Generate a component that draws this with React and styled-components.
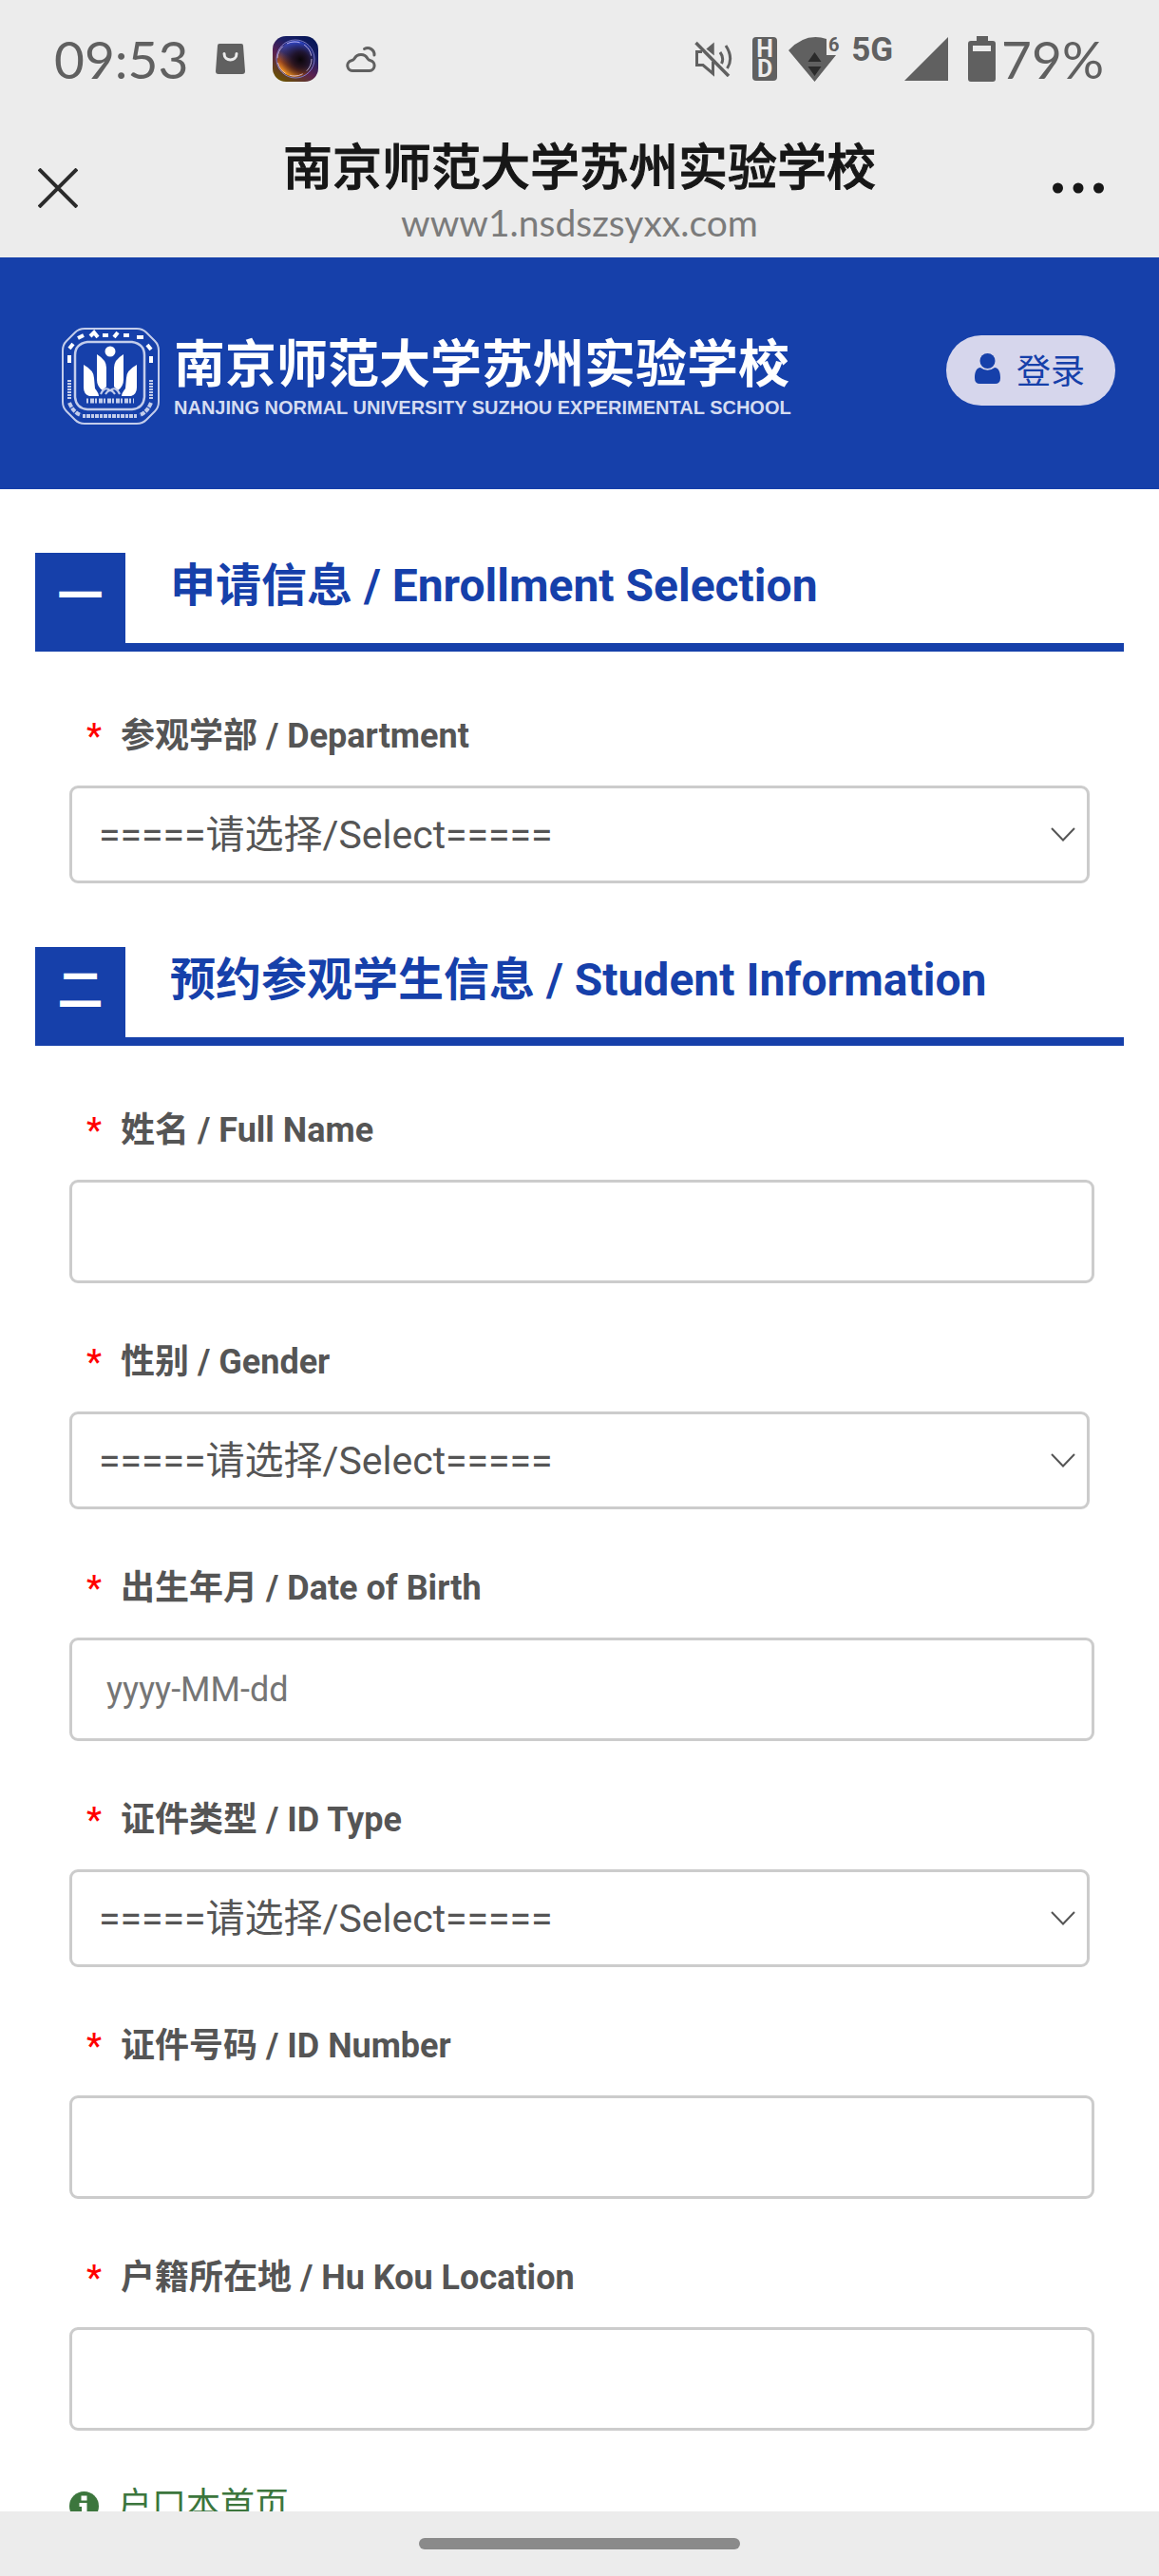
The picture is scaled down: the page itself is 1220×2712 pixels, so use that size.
import React from 'react'
import styled, { createGlobalStyle } from 'styled-components'

// Colors
const blue = '#1640aa'
const chrome = '#ececec'
const statusGray = '#606060'
const textGray = '#555555'

const sans = `Roboto, 'Noto Sans CJK SC', sans-serif`

const GlobalStyle = createGlobalStyle`
  * { box-sizing: border-box; }
  body {
    margin: 0;
    background-color: #fff;
    color: ${textGray};
    font-family: ${sans};
  }
  button, input, select { font-family: inherit; }
`

// Status bar icons
const BagIcon = () => (
  <svg width='31' height='32' viewBox='0 0 31 32'>
    <path d='M4 0h23q2 0 2 2l2 27q0 3-3 3H3q-3 0-3-3L2 2q0-2 2-2z' fill={statusGray} />
    <path d='M9 10.500c0 8.500 13 8.500 13 0' fill='none' stroke={chrome} strokeWidth='3' strokeLinecap='round' />
  </svg>
)

const OrbIcon = () => (
  <svg width='48' height='48' viewBox='0 0 48 48'>
    <defs>
      <linearGradient id='orbBack' x1='0.8' y1='0' x2='0.2' y2='1'>
        <stop offset='0' stopColor='#061656' />
        <stop offset='0.3' stopColor='#1a1f66' />
        <stop offset='0.6' stopColor='#5a2050' />
        <stop offset='1' stopColor='#6a5200' />
      </linearGradient>
      <linearGradient id='orbRing' x1='0.75' y1='0.05' x2='0.25' y2='0.95'>
        <stop offset='0' stopColor='#2f50f0' />
        <stop offset='0.5' stopColor='#3c3470' />
        <stop offset='0.75' stopColor='#a04a20' />
        <stop offset='1' stopColor='#ffa020' />
      </linearGradient>
      <radialGradient id='orbCore' cx='0.64' cy='0.52' r='0.55'>
        <stop offset='0' stopColor='#0a0508' />
        <stop offset='0.4' stopColor='#1a0a14' stopOpacity='0.8' />
        <stop offset='1' stopColor='#1a0a14' stopOpacity='0' />
      </radialGradient>
    </defs>
    <rect width='48' height='48' rx='14' fill='url(#orbBack)' />
    <circle cx='24' cy='24' r='19' fill='url(#orbRing)' />
    <circle cx='24' cy='24' r='19' fill='url(#orbCore)' />
    <circle cx='24' cy='24' r='20' fill='none' stroke='#8f8fe0' strokeWidth='1' opacity='0.8' />
    <circle cx='23' cy='24' r='18' fill='none' stroke='#e9d9ff' strokeWidth='1' strokeDasharray='14 5' opacity='0.7' />
  </svg>
)

const CloudIcon = () => (
  <svg width='33' height='30' viewBox='0 0 33 30' fill='none' stroke={statusGray} strokeWidth='3' strokeLinecap='round'>
    <path d='M8 27.500h17a5.500 5.500 0 0 0 1-10.800q-2-.4-3-2a8 8 0 0 0-14 0q-1 1.600-3 2A5.500 5.500 0 0 0 8 27.500z' />
    <path d='M19.500 4.500A7 7 0 0 1 30 11' />
  </svg>
)

const MuteIcon = () => (
  <svg width='40' height='38' viewBox='0 0 40 38' fill='none' stroke={statusGray} strokeWidth='3'>
    <path d='M8 11.500H2.500v14H9l10.500 9V22' />
    <path d='M13.500 8.500L20 3v11z' fill={statusGray} strokeWidth='1.500' />
    <path d='M27 12q4.500 6 1.500 12M33 5q8.500 13 1.500 24' />
    <path d='M1.500 2L36 37' strokeWidth='3.500' />
  </svg>
)

const WifiIcon = () => (
  <svg width='54' height='47' viewBox='0 0 54 47' overflow='visible'>
    <path d='M0 14Q18-5 40 2v17h10L27.500 47z' fill={statusGray} />
    <path d='M20.500 26h14L27.500 16zM20.500 31h14l-7 10z' fill='#2b2b2b' />
    <text x='42' y='15' fontFamily='Roboto, sans-serif' fontWeight='700' fontSize='20' fill={statusGray}>6</text>
  </svg>
)

const SignalIcon = () => (
  <svg width='46' height='46' viewBox='0 0 46 46'>
    <path d='M46 0v46H0z' fill={statusGray} />
  </svg>
)

const BatteryIcon = () => (
  <svg width='29' height='48' viewBox='0 0 29 48'>
    <path d='M9 0h12v5h5q3 0 3 3v37q0 3-3 3H3q-3 0-3-3V8q0-3 3-3h6z' fill={statusGray} />
    <rect x='5' y='10' width='19' height='6' fill={chrome} />
  </svg>
)

// Page icons
const CloseIcon = () => (
  <svg width='42' height='42' viewBox='0 0 42 42' stroke='#2b2b2b' strokeWidth='4'>
    <path d='M1 1l40 40M41 1L1 41' />
  </svg>
)

const MoreIcon = () => (
  <svg width='54' height='12' viewBox='0 0 54 12' fill='#171717'>
    <circle cx='5.500' cy='6' r='5.500' />
    <circle cx='27' cy='6' r='5.500' />
    <circle cx='48.500' cy='6' r='5.500' />
  </svg>
)

const UserIcon = () => (
  <svg width='27' height='32' viewBox='0 0 27 32' fill={blue}>
    <circle cx='13.500' cy='8' r='8' />
    <path d='M6 15q7.500 5.500 15 0c4.500.5 6 5 6 11q0 6-5.500 6h-16Q0 32 0 26c0-6 1.500-10.500 6-11z' />
  </svg>
)

const ChevronIcon = () => (
  <svg width='26' height='15' viewBox='0 0 26 15' fill='none' stroke={textGray} strokeWidth='2'>
    <path d='M1 1l12 12.500L25 1' />
  </svg>
)

const InfoIcon = () => (
  <svg width='31' height='31' viewBox='0 0 31 31'>
    <circle cx='15.500' cy='15.500' r='15.500' fill='#3c763d' />
    <path d='M12.500 4.500h6v5h-6zM10.500 12h8v10h2.500v4h-10.500v-4h2.500v-6h-2.500z' fill='#fff' />
  </svg>
)

const Emblem = () => (
  <svg width='103' height='102' viewBox='0 0 103 102' fill='none' stroke='#c3cdeb'>
    <path d='M24 1h55q6 0 10 4l9 9q4 4 4 10v54q0 6-4 10l-9 9q-4 4-10 4H24q-6 0-10-4l-9-9q-4-4-4-10V24q0-6 4-10l9-9q4-4 10-4z' strokeWidth='2' />
    <path d='M27 15h47q13 2 13 14v44q-1 12-13 13H27q-12-1-13-13V29q0-12 13-14z' strokeWidth='2.500' />
    <path d='M8 37v-8M8 22l4-5M17 11l6-3M30 9l4-4 4 5M43 8h6M55 10l4-5M65 8h6M79 10h7M90 18l4 5M94 30v7' stroke='#fff' strokeWidth='4' />
    <path d='M8 55v20M94 55v20' strokeWidth='4' strokeDasharray='2 1' />
    <path d='M8 79q4 10 12 13M94 79q-4 10-12 13' strokeWidth='4' strokeDasharray='5 1' />
    <path d='M22 93h58' strokeWidth='4' strokeDasharray='3 1 4 1' />
    <g fill='#fff' stroke='none'>
      <circle cx='51' cy='25' r='5.500' />
      <path d='M23 39q11 6 11 14l1 11q4 5 4 8H29q-6-2-6-9z' />
      <path d='M79 39q-11 6-11 14l-1 11q-4 5-4 8h10q6-2 6-9z' />
      <path d='M37 28q10 6 10 14v20l-4 4q-6-4-6-11z' />
      <path d='M65 28q-10 6-10 14v20l4 4q6-4 6-11z' />
    </g>
    <path d='M41 70q4-9 10-4 6-5 10 4M46 70q5-8 10 0' strokeWidth='2' />
    <path d='M26 77h50' strokeWidth='5' strokeDasharray='2 2 4 1' />
  </svg>
)

// Form data
const sections = [
  {
    number: '一',
    title: '申请信息 / Enrollment Selection',
    fields: [{ id: 'department', type: 'select', label: '参观学部 / Department' }]
  },
  {
    number: '二',
    title: '预约参观学生信息 / Student Information',
    fields: [
      { id: 'name', type: 'text', label: '姓名 / Full Name' },
      { id: 'gender', type: 'select', label: '性别 / Gender' },
      { id: 'birth', type: 'text', label: '出生年月 / Date of Birth', placeholder: 'yyyy-MM-dd' },
      { id: 'idType', type: 'select', label: '证件类型 / ID Type' },
      { id: 'idNumber', type: 'text', label: '证件号码 / ID Number' },
      { id: 'hukou', type: 'text', label: '户籍所在地 / Hu Kou Location' }
    ]
  }
]

// Field
const Field = ({ field }) => (
  <FieldContainer>
    <Label htmlFor={field.id}><Required>*</Required>{field.label}</Label>
    { field.type === 'select'
      ? <SelectBox>
          <Select id={field.id}>
            <option>=====请选择/Select=====</option>
          </Select>
          <SelectArrow><ChevronIcon/></SelectArrow>
        </SelectBox>
      : <Input id={field.id} type='text' placeholder={field.placeholder} />
    }
  </FieldContainer>
)

// App
const App = () => (
  <Screen>
    <GlobalStyle />
    <StatusBar>
      <StatusLeft>
        <StatusText>09:53</StatusText>
        <BagIcon/>
        <OrbIcon/>
        <CloudIcon/>
      </StatusLeft>
      <StatusRight>
        <MuteIcon/>
        <HdBadge><span>H</span><span>D</span></HdBadge>
        <WifiIcon/>
        <Network>5G</Network>
        <SignalIcon/>
        <Battery><BatteryIcon/><StatusText>79%</StatusText></Battery>
      </StatusRight>
    </StatusBar>
    <NavBar>
      <NavButton aria-label='关闭'><CloseIcon/></NavButton>
      <NavTitles>
        <NavTitle>南京师范大学苏州实验学校</NavTitle>
        <NavUrl>www1.nsdszsyxx.com</NavUrl>
      </NavTitles>
      <NavButton aria-label='更多' $end><MoreIcon/></NavButton>
    </NavBar>
    <Page>
      <Header>
        <Brand>
          <Emblem/>
          <div>
            <BrandName>南京师范大学苏州实验学校</BrandName>
            <BrandEnglish>NANJING NORMAL UNIVERSITY SUZHOU EXPERIMENTAL SCHOOL</BrandEnglish>
          </div>
        </Brand>
        <LoginButton><UserIcon/>登录</LoginButton>
      </Header>
      <Form>
        { sections.map(section => (
          <section key={section.number}>
            <SectionHeader>
              <SectionNumber>{section.number}</SectionNumber>
              <SectionTitle>{section.title}</SectionTitle>
            </SectionHeader>
            <Fields>
              { section.fields.map(field => <Field key={field.id} field={field} />) }
            </Fields>
          </section>
        )) }
        <Hint><InfoIcon/>户口本首页</Hint>
      </Form>
    </Page>
    <GestureBar><GestureHandle /></GestureBar>
  </Screen>
)

// Styles
const Screen = styled.div`
  display: flex;
  flex-direction: column;
  height: 100vh;
`

const StatusBar = styled.div`
  display: flex;
  flex: none;
  align-items: center;
  justify-content: space-between;
  height: 124px;
  padding: 0 58px 0 57px;
  background-color: ${chrome};
  color: ${statusGray};

  svg {
    display: block;
    flex: none;
  }
`

const StatusLeft = styled.div`
  display: flex;
  align-items: center;
  gap: 29px;
`

const StatusRight = styled.div`
  display: flex;
  align-items: center;
  gap: 12px;
`

const StatusText = styled.span`
  font-family: Lato, sans-serif;
  font-size: 55px;
  line-height: 64px;
`

const HdBadge = styled.div`
  display: flex;
  flex-direction: column;
  align-items: center;
  justify-content: center;
  width: 26px;
  height: 46px;
  margin-left: 9px;
  border-radius: 4px;
  background-color: ${statusGray};
  color: ${chrome};
  font-size: 25px;
  font-weight: 700;
  line-height: 21px;
`

const Network = styled.span`
  align-self: flex-start;
  font-size: 35px;
  font-weight: 700;
  line-height: 46px;
`

const Battery = styled.div`
  display: flex;
  align-items: center;
  gap: 6px;
  margin-left: 9px;
`

const NavBar = styled.div`
  display: flex;
  flex: none;
  align-items: center;
  justify-content: space-between;
  height: 147px;
  padding: 0 40px;
  background-color: ${chrome};
`

const NavButton = styled.button`
  display: flex;
  align-items: center;
  justify-content: ${p => p.$end ? 'flex-end' : 'flex-start'};
  width: 80px;
  height: 80px;
  padding: ${p => p.$end ? '0 18px 0 0' : '0'};
  border: 0;
  background: none;
`

const NavTitles = styled.div`
  padding-top: 12px;
  text-align: center;
`

const NavTitle = styled.div`
  color: #171717;
  font-size: 52px;
  font-weight: 500;
  line-height: 60px;
  -webkit-text-stroke: 1px #171717;
`

const NavUrl = styled.div`
  color: #7b7b7b;
  font-family: Lato, sans-serif;
  font-size: 39px;
  line-height: 52px;
`

const Page = styled.main`
  flex: 1;
  min-height: 0;
  overflow-y: auto;
  scrollbar-width: none;
`

const Header = styled.header`
  display: flex;
  align-items: center;
  justify-content: space-between;
  height: 244px;
  padding: 0 46px 6px 65px;
  background-color: ${blue};
`

const Brand = styled.div`
  display: flex;
  align-items: center;
  gap: 15px;
  padding-top: 12px;
  color: #fff;
  white-space: nowrap;
`

const BrandName = styled.div`
  font-size: 54px;
  font-weight: 700;
  line-height: 66px;
`

const BrandEnglish = styled.div`
  color: #d5dcf1;
  font-family: 'Liberation Sans', sans-serif;
  font-size: 20px;
  font-weight: 700;
  line-height: 22px;
`

const LoginButton = styled.button`
  display: flex;
  align-items: center;
  gap: 17px;
  height: 74px;
  padding: 0 32px 4px 30px;
  border: 0;
  border-radius: 37px;
  background-color: #d6d6ec;
  color: ${blue};
  font-size: 36px;
`

const Form = styled.form`
  padding: 0 37px;
`

const SectionHeader = styled.div`
  display: flex;
  margin-top: 67px;
  border-bottom: 9px solid ${blue};
`

const SectionNumber = styled.div`
  width: 95px;
  height: 95px;
  background-color: ${blue};
  color: #fff;
  font-size: 48px;
  font-weight: 700;
  line-height: 92px;
  text-align: center;
`

const SectionTitle = styled.h2`
  margin: 0;
  padding-left: 47px;
  color: ${blue};
  font-size: 48px;
  font-weight: 700;
  line-height: 70px;
`

const Fields = styled.div`
  padding: 6px 31px 0 36px;
`

const FieldContainer = styled.div`
  padding-top: 54px;
`

const Label = styled.label`
  display: flex;
  align-items: center;
  height: 50px;
  margin-bottom: 31px;
  padding-left: 18px;
  font-size: 36px;
  font-weight: 700;
`

const Required = styled.span`
  width: 36px;
  padding-top: 8px;
  color: #f00;
  font-weight: 500;
`

const SelectBox = styled.div`
  position: relative;
  margin-right: 5px;
`

const Select = styled.select`
  display: block;
  width: 100%;
  height: 103px;
  padding: 0 28px;
  border: 3px solid #ccc;
  border-radius: 9px;
  background-color: #fff;
  color: ${textGray};
  font-size: 41px;
  appearance: none;
`

const SelectArrow = styled.span`
  position: absolute;
  top: 0;
  right: 15px;
  bottom: 0;
  display: flex;
  align-items: center;
  pointer-events: none;
`

const Input = styled.input`
  display: block;
  width: 100%;
  height: 109px;
  padding: 0 36px;
  border: 3px solid #ccc;
  border-radius: 9px;
  background-color: #fff;
  color: ${textGray};
  font-size: 36px;

  &::placeholder { color: #757575; }
`

const Hint = styled.p`
  display: flex;
  align-items: center;
  gap: 20px;
  margin: 52px 36px;
  color: #3c763d;
  font-size: 36px;
  line-height: 54px;
`

const GestureBar = styled.div`
  display: flex;
  flex: none;
  align-items: center;
  justify-content: center;
  height: 68px;
  background-color: ${chrome};
`

const GestureHandle = styled.div`
  width: 338px;
  height: 12px;
  border-radius: 6px;
  background-color: #8a8a8a;
`

export default App
